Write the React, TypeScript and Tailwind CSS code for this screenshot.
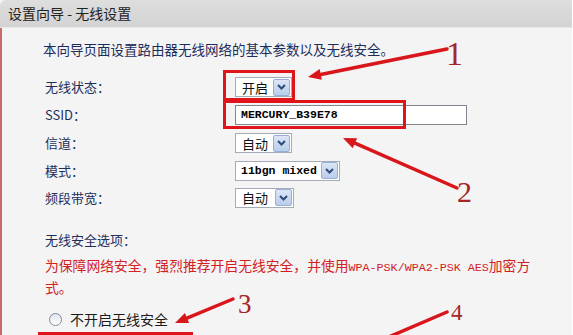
import React from "react";

const cjk = { fontFamily: '"Noto Sans CJK SC", "Liberation Sans", sans-serif' };

// 下拉框
function FakeSelect({ value, width, mono }: { value: string; width: string; mono?: boolean }) {
  return (
    <div className={`${width} h-[20px] flex items-center justify-between bg-white border border-[#a5acb5]`}>
      <span
        className={mono ? "pl-[5px] text-[11.5px] text-black font-bold leading-none" : "pl-[6px] text-[13px] text-[#111] leading-none"}
        style={mono ? { fontFamily: '"Liberation Mono", monospace' } : undefined}
      >
        {value}
      </span>
      <span className="w-[17px] h-[17px] mr-[1px] flex items-center justify-center bg-gradient-to-b from-[#dbe6f6] to-[#b9cdea] border border-[#98b0d6] rounded-[2px]">
        <svg width="9" height="6" viewBox="0 0 9 6">
          <path d="M1 1 L4.5 4.5 L8 1" fill="none" stroke="#2e4b7c" strokeWidth="2" />
        </svg>
      </span>
    </div>
  );
}

function Arrow({ x1, y1, x2, y2, head = true }: { x1: number; y1: number; x2: number; y2: number; head?: boolean }) {
  const dx = x2 - x1;
  const dy = y2 - y1;
  const len = Math.sqrt(dx * dx + dy * dy);
  const ux = dx / len;
  const uy = dy / len;
  const hl = 13;
  const hw = 5.5;
  const bx = x2 - ux * hl;
  const by = y2 - uy * hl;
  const px = uy;
  const py = -ux;
  return (
    <g>
      <line x1={x1} y1={y1} x2={head ? bx : x2} y2={head ? by : y2} stroke="#d8161b" strokeWidth="3.5" strokeLinecap="round" />
      {head && (
        <polygon
          points={`${x2},${y2} ${bx + px * hw},${by + py * hw} ${bx - px * hw},${by - py * hw}`}
          fill="#d8161b"
        />
      )}
    </g>
  );
}

const rows: { label: string; h: string; control: React.ReactNode }[] = [
  { label: "无线状态：", h: "h-[28px]", control: <FakeSelect value="开启" width="w-[57px]" /> },
  {
    label: "SSID：",
    h: "h-[28px]",
    control: (
      <div className="w-[232px] h-[20px] flex items-center bg-white border border-[#7f868e]">
        <span className="pl-[5px] text-[11.5px] font-bold text-black leading-none" style={{ fontFamily: '"Liberation Mono", monospace' }}>
          MERCURY_B39E78
        </span>
      </div>
    ),
  },
  { label: "信道：", h: "h-[28px]", control: <FakeSelect value="自动" width="w-[57px]" /> },
  { label: "模式：", h: "h-[27px]", control: <FakeSelect value="11bgn mixed" width="w-[105px]" mono /> },
  { label: "频段带宽：", h: "h-[27px]", control: <FakeSelect value="自动" width="w-[59px]" /> },
];

export default function App() {
  return (
    <div className="relative w-[573px] h-[335px] overflow-hidden bg-[#f4f4f4]" style={cjk}>
      {/* 标题栏 */}
      <div className="h-[28px] flex items-center pl-[8px] bg-gradient-to-b from-[#dedede] to-[#d3d3d3] border-b border-[#e9e9e9] rounded-tl-[6px] border-r border-r-white">
        <span className="text-[14px] text-[#222] whitespace-pre">设置向导 - 无线设置</span>
      </div>

      {/* 内容 */}
      <div className="h-[307px] border-l-2 border-[#c86a6a] border-r border-r-white pl-[41px] pt-[11px]">
        <div className="text-[13.5px] leading-[20px] text-[#1c2d5c]">本向导页面设置路由器无线网络的基本参数以及无线安全。</div>

        <div className="mt-[14px] flex flex-col">
          {rows.map((r) => (
            <div key={r.label} className={`${r.h} flex items-center`}>
              <span className="w-[192px] pl-[2px] text-[13px] text-[#1f2f5a]">{r.label}</span>
              {r.control}
            </div>
          ))}
        </div>

        <div className="mt-[19px] pl-[2px] text-[13px] leading-[20px] text-[#1f2f5a]">无线安全选项：</div>
        <div className="mt-[6px] pl-[2px] text-[13.8px] leading-[19px] text-[#d2211f] whitespace-nowrap">
          <div>
            为保障网络安全，强烈推荐开启无线安全，并使用
            <span className="text-[11.7px]" style={{ fontFamily: '"Liberation Mono", monospace' }}>
              WPA-PSK/WPA2-PSK AES
            </span>
            加密方
          </div>
          <div>式。</div>
        </div>

        <div className="mt-[12px] h-[20px] flex items-center pl-[6px]">
          <span className="w-[13px] h-[13px] rounded-full border border-[#7d8c9e] bg-gradient-to-b from-[#dfe5ec] to-white" />
          <span className="ml-[8px] text-[14px] text-[#1a1a1a]">不开启无线安全</span>
        </div>
      </div>

      {/* 标注红框 */}
      <div className="absolute left-[223px] top-[70px] w-[72px] h-[31px] border-[3px] border-[#e0141b]" />
      <div className="absolute left-[223px] top-[100px] w-[183px] h-[29px] border-[3px] border-[#e0141b]" />
      <div className="absolute left-[38px] top-[332px] w-[155px] h-[20px] border-[3px] border-[#e0141b]" />

      {/* 标注箭头 */}
      <svg className="absolute inset-0 pointer-events-none" width="573" height="335">
        <Arrow x1={447} y1={49} x2={308} y2={77} />
        <Arrow x1={457} y1={188} x2={343} y2={138} />
        <Arrow x1={233} y1={299} x2={175} y2={323} />
        <Arrow x1={447} y1={312} x2={370} y2={345} head={false} />
      </svg>

      <span className="absolute left-[446px] top-[37px] text-[34px] leading-none text-[#a52626]" style={{ fontFamily: '"Liberation Serif", serif' }}>1</span>
      <span className="absolute left-[457px] top-[177px] text-[30px] leading-none text-[#a52626]" style={{ fontFamily: '"Liberation Serif", serif' }}>2</span>
      <span className="absolute left-[238px] top-[291px] text-[27px] leading-none text-[#a52626]" style={{ fontFamily: '"Liberation Serif", serif' }}>3</span>
      <span className="absolute left-[451px] top-[301px] text-[23px] leading-none text-[#a52626]" style={{ fontFamily: '"Liberation Serif", serif' }}>4</span>
    </div>
  );
}
